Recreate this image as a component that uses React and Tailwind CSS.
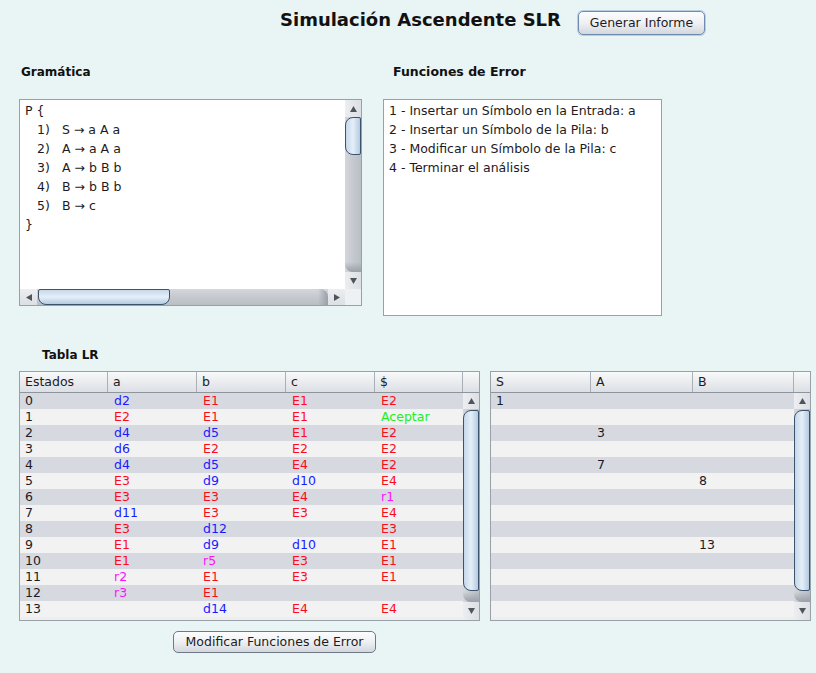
import React from "react";

const FONT = "font-['DejaVu_Sans',sans-serif]";

function Tri({ dir }) {
  const pts = {
    up: "3.5,0 7,6 0,6",
    down: "0,0 7,0 3.5,6",
    left: "0,3.5 6,0 6,7",
    right: "0,0 6,3.5 0,7",
  }[dir];
  const horiz = dir === "left" || dir === "right";
  return (
    <svg width={horiz ? 6 : 7} height={horiz ? 7 : 6} viewBox={horiz ? "0 0 6 7" : "0 0 7 6"}>
      <polygon points={pts} fill="#4f555c" />
    </svg>
  );
}

function VScroll({ upClass, trackClass, thumbClass, downClass }) {
  return (
    <div className="flex h-full w-[16px] flex-col bg-gradient-to-r from-[#eceef1] to-[#dcdfe3]">
      <div className={`flex items-center justify-center ${upClass}`}>
        <Tri dir="up" />
      </div>
      <div className={`flex flex-col bg-gradient-to-r from-[#d4d7dc] via-[#c5c9cf] to-[#babfc6] ${trackClass}`}>
        <div
          className={`rounded-l-[8px] rounded-r-[2px] border border-[#3d526b] bg-gradient-to-r from-[#c5d8ea] via-[#e6eff8] to-[#b3cbe2] ${thumbClass}`}
        />
        <div className="flex-1" />
        <div className="h-[10px] bg-gradient-to-b from-transparent to-[#9aa0a8] rounded-bl-[8px]" />
      </div>
      <div className={`flex items-center justify-center ${downClass}`}>
        <Tri dir="down" />
      </div>
    </div>
  );
}

function HScroll() {
  return (
    <div className="flex h-[16px] w-full flex-row bg-gradient-to-b from-[#eceef1] to-[#dcdfe3]">
      <div className="flex w-[17px] items-center justify-center">
        <Tri dir="left" />
      </div>
      <div className="flex flex-1 flex-row bg-gradient-to-b from-[#d4d7dc] via-[#c5c9cf] to-[#babfc6]">
        <div className="ml-[1px] h-full w-[132px] rounded-t-[2px] rounded-b-[8px] border border-[#3d526b] bg-gradient-to-b from-[#c5d8ea] via-[#e6eff8] to-[#b3cbe2]" />
        <div className="flex-1" />
        <div className="w-[10px] rounded-tr-[8px] bg-gradient-to-r from-transparent to-[#9aa0a8]" />
      </div>
      <div className="flex w-[17px] items-center justify-center">
        <Tri dir="right" />
      </div>
    </div>
  );
}

const grammar = [
  ["1)", "S → a A a"],
  ["2)", "A → a A a"],
  ["3)", "A → b B b"],
  ["4)", "B → b B b"],
  ["5)", "B → c"],
];

const errors = [
  "1 - Insertar un Símbolo en la Entrada: a",
  "2 - Insertar un Símbolo de la Pila: b",
  "3 - Modificar un Símbolo de la Pila: c",
  "4 - Terminar el análisis",
];

const lr = [
  ["0", "d2", "E1", "E1", "E2"],
  ["1", "E2", "E1", "E1", "Aceptar"],
  ["2", "d4", "d5", "E1", "E2"],
  ["3", "d6", "E2", "E2", "E2"],
  ["4", "d4", "d5", "E4", "E2"],
  ["5", "E3", "d9", "d10", "E4"],
  ["6", "E3", "E3", "E4", "r1"],
  ["7", "d11", "E3", "E3", "E4"],
  ["8", "E3", "d12", "", "E3"],
  ["9", "E1", "d9", "d10", "E1"],
  ["10", "E1", "r5", "E3", "E1"],
  ["11", "r2", "E1", "E3", "E1"],
  ["12", "r3", "E1", "", ""],
  ["13", "", "d14", "E4", "E4"],
];

const goTo = [
  ["1", "", ""],
  ["", "", ""],
  ["", "3", ""],
  ["", "", ""],
  ["", "7", ""],
  ["", "", "8"],
  ["", "", ""],
  ["", "", ""],
  ["", "", ""],
  ["", "", "13"],
  ["", "", ""],
  ["", "", ""],
  ["", "", ""],
  ["", "", ""],
];

function cellColor(v) {
  if (v === "Aceptar") return "text-[#22ee22]";
  if (v.startsWith("d")) return "text-[#1a1aff]";
  if (v.startsWith("E")) return "text-[#ff0a1a]";
  if (v.startsWith("r")) return "text-[#ff10ff]";
  return "text-[#1e1a22]";
}

const lrWidths = ["w-[88px]", "w-[89px]", "w-[89px]", "w-[89px]", "w-[88px]"];
const goWidths = ["w-[100px]", "w-[102px]", "w-[101px]"];

function Header({ cols, widths }) {
  return (
    <div className="flex h-[21px] flex-row border-b border-[#8e949c] bg-gradient-to-b from-[#f8f9fa] to-[#dcdfe4]">
      {cols.map((c, i) => (
        <div
          key={i}
          className={`flex items-center border-r border-[#aab0b7] pl-[5px] text-[#1e1a22] ${widths[i]}`}
        >
          {c}
        </div>
      ))}
      <div className="w-[16px]" />
    </div>
  );
}

function Rows({ data, widths, bodyWidth }) {
  return (
    <div className={`flex flex-col ${bodyWidth}`}>
      {data.map((row, r) => (
        <div
          key={r}
          className={`flex h-[16px] flex-row leading-[16px] ${r % 2 === 0 ? "bg-[#d6d9df]" : "bg-[#f2f2f2]"}`}
        >
          {row.map((v, i) => (
            <div key={i} className={`${widths[i]} ${i === 0 ? "pl-[5px]" : "pl-[6px]"} ${cellColor(v)}`}>
              {v}
            </div>
          ))}
        </div>
      ))}
    </div>
  );
}

function NimbusButton({ children, className }) {
  return (
    <div
      className={`flex items-center justify-center rounded-[5px] border bg-gradient-to-b from-[#fdfdfe] via-[#eef0f3] to-[#d3d8de] text-[12.5px] text-[#1e1a22] ${className}`}
    >
      {children}
    </div>
  );
}

export default function App() {
  return (
    <div className={`h-[673px] w-[816px] overflow-hidden bg-[#e9f4f5] ${FONT}`}>
      {/* header */}
      <div className="flex flex-row items-start pl-[280px] pt-[9px]">
        <div className="w-[298px] text-[18px] font-bold leading-[22px] text-[#111]">
          Simulación Ascendente SLR
        </div>
        <NimbusButton className="mt-[2px] h-[24px] w-[127px] border-[#6d8cb0] shadow-[0_0_0_1px_#b9cde3]">
          Generar Informe
        </NimbusButton>
      </div>

      {/* top panels */}
      <div className="mt-[29px] flex flex-row pl-[19px]">
        <div className="flex flex-col">
          <div className="h-[16px] pl-[2px] text-[12px] font-bold leading-[16px] text-[#111]">Gramática</div>
          <div className="mt-[19px] h-[207px] w-[343px] border border-[#9aa0a8] bg-white">
            <div className="flex h-[189px] flex-row">
              <div className="flex-1 pl-[5px] pt-[1px] text-[12.5px] leading-[19px] text-[#1e1a22]">
                <div>P {"{"}</div>
                {grammar.map(([n, p]) => (
                  <div key={n} className="flex flex-row">
                    <span className="ml-[12px] w-[25px]">{n}</span>
                    <span>{p}</span>
                  </div>
                ))}
                <div>{"}"}</div>
              </div>
              <VScroll
                upClass="h-[17px]"
                trackClass="flex-1"
                thumbClass="h-[38px]"
                downClass="h-[17px]"
              />
            </div>
            <div className="flex h-[16px] flex-row">
              <div className="flex-1">
                <HScroll />
              </div>
              <div className="w-[16px] bg-[#eef1f3]" />
            </div>
          </div>
        </div>
        <div className="ml-[21px] flex flex-col">
          <div className="h-[16px] pl-[10px] text-[12.5px] font-bold leading-[16px] text-[#111]">
            Funciones de Error
          </div>
          <div className="mt-[19px] h-[217px] w-[279px] border border-[#9aa0a8] bg-white pl-[5px] pt-[1px] text-[12.5px] leading-[19px] text-[#1e1a22]">
            {errors.map((e) => (
              <div key={e}>{e}</div>
            ))}
          </div>
        </div>
      </div>

      {/* Tabla LR */}
      <div className="mt-[31px] h-[16px] pl-[42px] text-[12px] font-bold leading-[16px] text-[#111]">Tabla LR</div>
      <div className="mt-[8px] flex flex-row pl-[19px] text-[12.5px]">
        <div className="flex h-[250px] w-[461px] flex-col border border-[#9aa0a8] bg-[#eceef0]">
          <Header cols={["Estados", "a", "b", "c", "$"]} widths={lrWidths} />
          <div className="flex min-h-0 flex-1 flex-row">
            <Rows data={lr} widths={lrWidths} bodyWidth="w-[443px]" />
            <VScroll
              upClass="h-[16px]"
              trackClass="h-[193px]"
              thumbClass="mt-[1px] h-[181px]"
              downClass="flex-1"
            />
          </div>
        </div>
        <div className="ml-[10px] flex h-[250px] w-[321px] flex-col border border-[#9aa0a8] bg-[#eceef0]">
          <Header cols={["S", "A", "B"]} widths={goWidths} />
          <div className="flex min-h-0 flex-1 flex-row">
            <Rows data={goTo} widths={goWidths} bodyWidth="w-[303px]" />
            <VScroll
              upClass="h-[16px]"
              trackClass="h-[193px]"
              thumbClass="mt-[1px] h-[181px]"
              downClass="flex-1"
            />
          </div>
        </div>
      </div>

      <div className="mt-[10px] pl-[173px]">
        <NimbusButton className="h-[22px] w-[203px] border-[#6f7885]">Modificar Funciones de Error</NimbusButton>
      </div>
    </div>
  );
}
